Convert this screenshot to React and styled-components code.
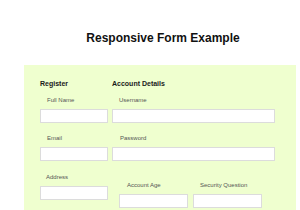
import React from 'react';
import styled, { createGlobalStyle } from 'styled-components';

const GlobalStyle = createGlobalStyle`
  html, body {
    margin: 0;
    padding: 0;
    background: #ffffff;
    font-family: "Liberation Sans", Arial, sans-serif;
  }
`;

const Page = styled.div`
  width: 300px;
  height: 210px;
  overflow: hidden;
  display: flex;
  flex-direction: column;
`;

const Title = styled.h1`
  margin: 31px 0 0 0;
  padding-left: 26px;
  font-size: 12px;
  line-height: 14px;
  font-weight: bold;
  color: #111;
  text-align: center;
`;

const Panel = styled.form`
  margin: 20px 0 0 24px;
  width: 272px;
  background: #efffcf;
  padding: 15px 0 0 16px;
  box-sizing: border-box;
  display: flex;
  gap: 4px;
  flex: 1;
`;

const Column = styled.div`
  display: flex;
  flex-direction: column;
  width: ${({ width }) => width}px;
`;

const Heading = styled.div`
  font-size: 7px;
  line-height: 8px;
  font-weight: bold;
  color: #1a1a1a;
  margin-bottom: 7.5px;
`;

const Field = styled.div`
  display: flex;
  flex-direction: column;
  margin-top: ${({ top }) => top || 0}px;
  width: ${({ width }) => (width ? `${width}px` : 'auto')};
`;

const Label = styled.label`
  font-size: 6px;
  line-height: 8px;
  color: #555;
  padding-left: ${({ indent }) => indent ?? 7}px;
  margin-bottom: 5px;
`;

const Input = styled.input`
  box-sizing: border-box;
  height: 14px;
  width: 100%;
  margin: 0;
  padding: 0 3px;
  border: 1px solid #dcdcdc;
  background: #fff;
  outline: none;
`;

const Row = styled.div`
  display: flex;
  gap: 5px;
  padding-left: 7px;
  margin-top: 20px;
`;

export default function App() {
  return (
    <Page>
      <GlobalStyle />
      <Title>Responsive Form Example</Title>
      <Panel>
        <Column width={68}>
          <Heading>Register</Heading>
          <Field>
            <Label>Full Name</Label>
            <Input />
          </Field>
          <Field top={11}>
            <Label>Email</Label>
            <Input />
          </Field>
          <Field top={12}>
            <Label indent={6}>Address</Label>
            <Input />
          </Field>
        </Column>
        <Column width={163}>
          <Heading>Account Details</Heading>
          <Field>
            <Label>Username</Label>
            <Input />
          </Field>
          <Field top={11}>
            <Label indent={8}>Password</Label>
            <Input />
          </Field>
          <Row>
            <Field width={69}>
              <Label indent={8}>Account Age</Label>
              <Input />
            </Field>
            <Field width={69}>
              <Label indent={7}>Security Question</Label>
              <Input />
            </Field>
          </Row>
        </Column>
      </Panel>
    </Page>
  );
}
